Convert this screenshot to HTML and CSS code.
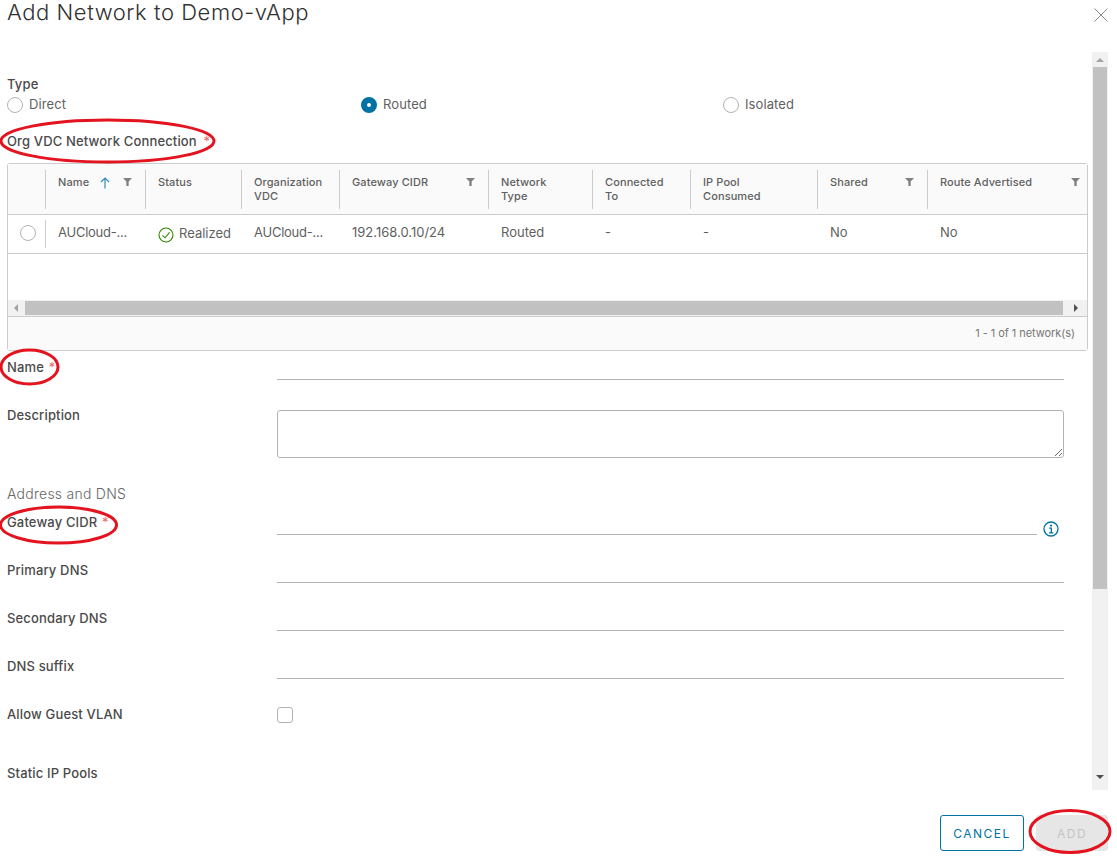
FILE: index.html
```html
<!DOCTYPE html>
<html lang="en">
<head>
    <meta charset="UTF-8">
    <title>Add Network to Demo-vApp</title>
    <link rel="stylesheet" href="styles.css">
</head>
<body>
    <div class="modal">
        <div class="modal-header">
            <h1 class="modal-title">Add Network to Demo-vApp</h1>
            <svg class="close-icon" viewBox="0 0 14 14" width="14" height="14"><path d="M0.5 0.5L13.5 13.5M13.5 0.5L0.5 13.5"/></svg>
        </div>

        <div class="modal-body">
            <div class="content">
                <div class="field-label type-label">Type</div>
                <div class="radio-row">
                    <label class="radio-item col-direct"><input type="radio" name="type">Direct</label>
                    <label class="radio-item col-routed"><input type="radio" name="type" checked>Routed</label>
                    <label class="radio-item"><input type="radio" name="type">Isolated</label>
                </div>

                <div class="field-label org-label">Org VDC Network Connection <span class="req org-req">*</span></div>

                <div class="datagrid">
                    <div class="dg-row dg-head">
                        <div class="dg-cell"></div>
                        <div class="dg-cell dg-split"><span>Name</span>
                            <svg class="sort-icon" viewBox="0 0 10 12" width="10" height="12"><path d="M5 11.5V1M1 5L5 1L9 5"/></svg>
                            <svg class="filter-icon" viewBox="0 0 10 10" width="9" height="8" preserveAspectRatio="none"><path d="M0 0H10L6.3 4.5V10H3.7V4.5Z"/></svg>
                        </div>
                        <div class="dg-cell">Status</div>
                        <div class="dg-cell">Organization<br>VDC</div>
                        <div class="dg-cell dg-split"><span>Gateway CIDR</span>
                            <svg class="filter-icon" viewBox="0 0 10 10" width="9" height="8" preserveAspectRatio="none"><path d="M0 0H10L6.3 4.5V10H3.7V4.5Z"/></svg>
                        </div>
                        <div class="dg-cell">Network<br>Type</div>
                        <div class="dg-cell">Connected<br>To</div>
                        <div class="dg-cell">IP Pool<br>Consumed</div>
                        <div class="dg-cell dg-split"><span>Shared</span>
                            <svg class="filter-icon" viewBox="0 0 10 10" width="9" height="8" preserveAspectRatio="none"><path d="M0 0H10L6.3 4.5V10H3.7V4.5Z"/></svg>
                        </div>
                        <div class="dg-cell dg-split dg-last"><span>Route Advertised</span>
                            <svg class="filter-icon" viewBox="0 0 10 10" width="9" height="8" preserveAspectRatio="none"><path d="M0 0H10L6.3 4.5V10H3.7V4.5Z"/></svg>
                        </div>
                    </div>
                    <div class="dg-row dg-body">
                        <div class="dg-cell dg-select"><input type="radio" name="net"></div>
                        <div class="dg-cell dg-trunc">AUCloud-...</div>
                        <div class="dg-cell dg-status">
                            <svg viewBox="0 0 16 16" width="16" height="16"><circle cx="8" cy="8" r="7"/><path d="M4.5 8.3L7 10.8L11.6 5.4"/></svg>
                            Realized
                        </div>
                        <div class="dg-cell dg-trunc">AUCloud-...</div>
                        <div class="dg-cell">192.168.0.10/24</div>
                        <div class="dg-cell">Routed</div>
                        <div class="dg-cell">-</div>
                        <div class="dg-cell">-</div>
                        <div class="dg-cell">No</div>
                        <div class="dg-cell">No</div>
                    </div>
                    <div class="dg-empty"></div>
                    <div class="hscroll">
                        <span class="arrow-left"></span>
                        <div class="hscroll-thumb"></div>
                        <span class="arrow-right"></span>
                    </div>
                    <div class="dg-footer">1 - 1 of 1 network(s)</div>
                </div>

                <div class="form-row">
                    <div class="field-label">Name <span class="req">*</span></div>
                    <input class="line-input" type="text">
                </div>
                <div class="form-row desc-row">
                    <div class="field-label">Description</div>
                    <textarea class="desc-input"></textarea>
                </div>

                <div class="section-title">Address and DNS</div>

                <div class="form-row">
                    <div class="field-label">Gateway CIDR <span class="req">*</span></div>
                    <div class="input-icon">
                        <input class="line-input" type="text">
                        <svg class="info-icon" viewBox="0 0 16 16" width="16" height="16"><circle cx="8" cy="8" r="7"/><circle class="info-dot" cx="8" cy="4.6" r="1.1"/><path d="M6.2 7.2H8.3V11.6M6 11.8H10.4"/></svg>
                    </div>
                </div>
                <div class="form-row">
                    <div class="field-label">Primary DNS</div>
                    <input class="line-input" type="text">
                </div>
                <div class="form-row">
                    <div class="field-label">Secondary DNS</div>
                    <input class="line-input" type="text">
                </div>
                <div class="form-row">
                    <div class="field-label">DNS suffix</div>
                    <input class="line-input" type="text">
                </div>
                <div class="form-row">
                    <div class="field-label">Allow Guest VLAN</div>
                    <input class="check-input" type="checkbox">
                </div>
                <div class="field-label pools-label">Static IP Pools</div>
            </div>

            <div class="vscroll">
                <span class="arrow-up"></span>
                <div class="vscroll-thumb"></div>
                <span class="arrow-down"></span>
            </div>
        </div>

        <div class="modal-footer">
            <button class="btn btn-outline" type="button">Cancel</button>
            <button class="btn btn-disabled" type="button" disabled>Add</button>
        </div>
    </div>

    <!-- red marks drawn on top of the screenshot -->
    <svg class="marks" viewBox="0 0 1117 863" width="1117" height="863">
        <ellipse cx="107.500" cy="141" rx="106.500" ry="21"/>
        <ellipse cx="29.500" cy="367" rx="28.500" ry="17"/>
        <ellipse cx="58.500" cy="525" rx="58" ry="18"/>
        <ellipse cx="1070" cy="831.500" rx="40" ry="21"/>
    </svg>
</body>
</html>
```

FILE: styles.css
```css
* {
    box-sizing: border-box;
}

body {
    margin: 0;
    width: 1117px;
    height: 863px;
    overflow: hidden;
    position: relative;
    background: #fff;
    font-family: Inter, "Open Sans", sans-serif;
    font-size: 13px;
    color: #5f5f5f;
}

.modal-header {
    height: 52px;
    display: flex;
    justify-content: space-between;
    padding: 0 9px 0 7px;
}

.modal-title {
    margin: 0;
    font-size: 22px;
    font-weight: 300;
    line-height: 24px;
    color: #313131;
    letter-spacing: 0.55px;
}

.close-icon {
    margin-top: 8px;
    fill: none;
    stroke: #8c8c8c;
    stroke-width: 1;
}

.modal-body {
    display: flex;
    height: 738px;
}

.content {
    width: 1091px;
    padding-left: 7px;
    overflow: hidden;
}

.field-label {
    font-size: 13px;
    font-weight: 500;
    line-height: 16px;
    letter-spacing: 0.15px;
    color: #4a4a4a;
}

.req {
    color: #e8686c;
    font-weight: 400;
    margin-left: 1px;
}

.org-req {
    margin-left: 3px;
}

.type-label {
    margin-top: 24px;
}

.radio-row {
    display: flex;
    margin-top: 5px;
}

.radio-item {
    display: flex;
    align-items: flex-start;
    gap: 6px;
    height: 16px;
    font-size: 13px;
    line-height: 15px;
    letter-spacing: 0.1px;
}

.col-direct {
    width: 354px;
}

.col-routed {
    width: 362px;
}

input[type="radio"] {
    appearance: none;
    width: 16px;
    height: 16px;
    margin: 0;
    border: 1px solid #b3b3b3;
    border-radius: 50%;
    background: #fff;
}

input[type="radio"]:checked {
    border: 6px solid #0072a3;
}

.org-label {
    margin-top: 20px;
}

.datagrid {
    width: 1081px;
    height: 188px;
    margin-top: 14px;
    border: 1px solid #ccc;
    border-radius: 3px;
}

.dg-row {
    display: grid;
    grid-template-columns: 37px 100px 96px 98px 149px 104px 98px 127px 110px 160px;
}

.dg-head {
    height: 51px;
    padding: 6px 0 5px;
    background: #fafafa;
    border-bottom: 1px solid #ccc;
    font-size: 11px;
    font-weight: 500;
    line-height: 14px;
    letter-spacing: 0.1px;
    color: #5f5f5f;
}

.dg-head .dg-cell {
    border-left: 1px solid #ccc;
    padding: 5px 8px 0 12px;
}

.dg-head .dg-cell:first-child {
    border-left: none;
}

.dg-head .dg-split {
    display: flex;
    align-items: flex-start;
    padding-right: 13px;
}

.dg-head .dg-last {
    padding-right: 7px;
}

.dg-split span {
    flex: 1;
}

.sort-icon {
    margin: 2px 13px 0 0;
    fill: none;
    stroke: #2f8fc0;
    stroke-width: 1.200;
}

.filter-icon {
    margin-top: 3px;
    fill: #808080;
    flex: none;
}

.dg-body {
    height: 39px;
    border-bottom: 1px solid #ccc;
    line-height: 34px;
}

.dg-body .dg-cell {
    padding-left: 13px;
    white-space: nowrap;
}

.dg-body .dg-cell:nth-child(2) {
    border-left: 1px solid #ccc;
    height: 28px;
    margin-top: 5px;
    padding-left: 12px;
    line-height: 24px;
}

.dg-body .dg-select {
    padding: 10px 0 0 12px;
    line-height: 0;
}

.dg-trunc {
    letter-spacing: -0.25px;
}

.dg-status {
    display: flex;
    align-items: center;
    gap: 5px;
    height: 36px;
}

.dg-status svg {
    fill: none;
    stroke: #318700;
    stroke-width: 1.100;
    margin-top: 4px;
}

.dg-empty {
    height: 46px;
}

.hscroll {
    display: flex;
    align-items: center;
    height: 16px;
    background: #f1f1f1;
}

.hscroll-thumb {
    width: 1038px;
    height: 14px;
    margin: 0 0 0 7px;
    background: #c1c1c1;
}

.arrow-left {
    margin-left: 6px;
    border: 4px solid transparent;
    border-left: none;
    border-right-color: #a3a3a3;
}

.arrow-right {
    margin-left: 11px;
    border: 4px solid transparent;
    border-right: none;
    border-left-color: #505050;
}

.dg-footer {
    height: 34px;
    padding-right: 12px;
    background: #fafafa;
    border-top: 1px solid #ccc;
    text-align: right;
    font-size: 11px;
    line-height: 33px;
    color: #777;
    letter-spacing: -0.05px;
}

.form-row {
    display: grid;
    grid-template-columns: 270px 787px;
    align-items: start;
    height: 48px;
}

.form-row .field-label {
    margin-top: 8px;
}

.line-input {
    width: 100%;
    height: 29px;
    border: none;
    border-bottom: 1px solid #b3b3b3;
    outline: none;
    background: transparent;
}

.desc-row {
    height: 87px;
}

.desc-input {
    display: block;
    width: 787px;
    height: 48px;
    margin-top: 11px;
    border: 1px solid #b3b3b3;
    border-radius: 3px;
    outline: none;
}

.section-title {
    height: 20px;
    font-size: 14px;
    font-weight: 300;
    line-height: 16px;
    color: #666;
    letter-spacing: 0.25px;
}

.input-icon {
    display: flex;
    align-items: flex-start;
    gap: 6px;
    width: 782px;
}

.info-icon {
    flex: none;
    margin-top: 15px;
    fill: none;
    stroke: #0072a3;
    stroke-width: 1.300;
}

.info-dot {
    fill: #0072a3;
    stroke: none;
}

.check-input {
    appearance: none;
    width: 16px;
    height: 16px;
    margin: 9px 0 0;
    border: 1px solid #b3b3b3;
    border-radius: 3px;
    background: #fff;
}

.pools-label {
    margin-top: 19px;
}

.vscroll {
    display: flex;
    flex-direction: column;
    align-items: center;
    justify-content: flex-start;
    width: 16px;
    margin-left: 1px;
    background: #f1f1f1;
}

.vscroll-thumb {
    width: 14px;
    height: 522px;
    margin-top: 5px;
    background: #c1c1c1;
}

.arrow-up {
    margin-top: 6px;
    border: 4px solid transparent;
    border-top: none;
    border-bottom-color: #a3a3a3;
}

.arrow-down {
    margin-top: 186px;
    border: 4px solid transparent;
    border-bottom: none;
    border-top-color: #505050;
}

.modal-footer {
    display: flex;
    justify-content: flex-end;
    gap: 12px;
    padding: 25px 9px 0 0;
}

.btn {
    height: 36px;
    padding: 0;
    border-radius: 3px;
    font-family: inherit;
    font-size: 12px;
    font-weight: 400;
    letter-spacing: 1.500px;
    text-transform: uppercase;
}

.btn-outline {
    width: 84px;
    border: 1px solid #0072a3;
    background: #fff;
    color: #0072a3;
}

.btn-disabled {
    width: 72px;
    border: none;
    background: #e6e6e6;
    color: #c4c4c4;
}

.marks {
    position: absolute;
    left: 0;
    top: 0;
    pointer-events: none;
    fill: none;
    stroke: #e3141f;
    stroke-width: 3;
}
```
